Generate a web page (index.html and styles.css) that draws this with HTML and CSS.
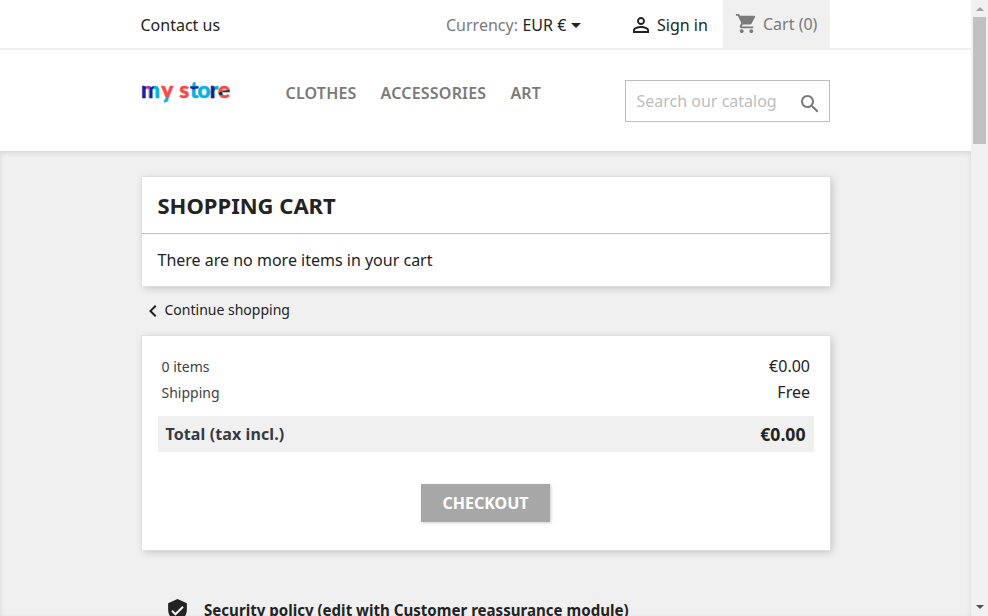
FILE: index.html
```html
<!DOCTYPE html>
<html lang="en">
<head>
<meta charset="utf-8">
<title>Cart</title>
<link rel="stylesheet" href="styles.css">
</head>
<body>
<div class="page">
  <header class="header">
    <nav class="topbar">
      <div class="container topbar-row">
        <a class="contact">Contact us</a>
        <div class="currency"><span class="muted">Currency:</span> <span>EUR €</span><i class="caret"></i></div>
        <a class="signin"><svg class="user-icon" viewBox="0 0 24 24"><path d="M12 5.900a2.100 2.100 0 1 1 0 4.200 2.100 2.100 0 0 1 0-4.200m0 9c2.970 0 6.100 1.460 6.100 2.100v1.100H5.900V17c0-.64 3.130-2.100 6.100-2.100M12 4C9.790 4 8 5.790 8 8s1.790 4 4 4 4-1.790 4-4-1.790-4-4-4zm0 9c-2.670 0-8 1.340-8 4v3h16v-3c0-2.660-5.330-4-8-4z"/></svg><span>Sign in</span></a>
        <a class="cart"><svg class="cart-icon" viewBox="0 0 24 24"><path d="M7 18c-1.100 0-1.990.9-1.990 2S5.900 22 7 22s2-.9 2-2-.9-2-2-2zM1 2v2h2l3.600 7.590-1.350 2.450c-.16.280-.25.610-.25.960 0 1.100.9 2 2 2h12v-2H7.420c-.14 0-.25-.11-.25-.25l.03-.12.9-1.630h7.450c.75 0 1.410-.41 1.750-1.030l3.580-6.490c.08-.14.12-.31.12-.48 0-.55-.45-1-1-1H5.210l-.94-2H1zm16 16c-1.100 0-1.990.9-1.990 2s.89 2 1.990 2 2-.9 2-2-.9-2-2-2z"/></svg><span>Cart (0)</span></a>
      </div>
    </nav>
    <div class="container main-row">
      <svg class="logo" viewBox="0 0 92 30">
        <defs>
          <linearGradient id="m" gradientUnits="userSpaceOnUse" x1="1" y1="0" x2="20" y2="0"><stop offset=".18" stop-color="#0a2aa5"/><stop offset=".22" stop-color="#c52cae"/><stop offset=".4" stop-color="#c52cae"/><stop offset=".44" stop-color="#0a2aa5"/><stop offset=".6" stop-color="#0a2aa5"/><stop offset=".66" stop-color="#00b4e4"/></linearGradient>
          <linearGradient id="y" gradientUnits="userSpaceOnUse" x1="0" y1="10" x2="0" y2="28"><stop offset=".58" stop-color="#ff4545"/><stop offset=".64" stop-color="#00b4e4"/></linearGradient>
          <linearGradient id="t" gradientUnits="userSpaceOnUse" x1="0" y1="4" x2="0" y2="22"><stop offset=".34" stop-color="#00b4e4"/><stop offset=".38" stop-color="#12209c"/><stop offset=".5" stop-color="#12209c"/><stop offset=".54" stop-color="#00b4e4"/></linearGradient>
          <linearGradient id="r" gradientUnits="userSpaceOnUse" x1="69" y1="0" x2="78" y2="0"><stop offset=".48" stop-color="#12209c"/><stop offset=".55" stop-color="#00b4e4"/></linearGradient>
          <linearGradient id="e" gradientUnits="userSpaceOnUse" x1="81" y1="10" x2="84" y2="22"><stop offset=".42" stop-color="#ff4545"/><stop offset=".48" stop-color="#063a46"/><stop offset=".66" stop-color="#063a46"/><stop offset=".7" stop-color="#ff4545"/></linearGradient>
        </defs>
        <text class="logo-text" y="22" x="0 20.300 30 38.300 49 56.500 68.700 77"><tspan fill="url(#m)" stroke="url(#m)">m</tspan><tspan fill="url(#y)" stroke="url(#y)">y</tspan> <tspan fill="#ff4545" stroke="#ff4545">s</tspan><tspan fill="url(#t)" stroke="url(#t)">t</tspan><tspan fill="#00b4e4" stroke="#00b4e4">o</tspan><tspan fill="url(#r)" stroke="url(#r)">r</tspan><tspan fill="url(#e)" stroke="url(#e)">e</tspan></text>
      </svg>
      <ul class="menu"><li>CLOTHES</li><li>ACCESSORIES</li><li>ART</li></ul>
      <div class="search"><span>Search our catalog</span><svg class="search-icon" viewBox="0 0 24 24"><path d="M15.500 14h-.79l-.28-.27C15.410 12.590 16 11.110 16 9.500 16 5.910 13.090 3 9.500 3S3 5.910 3 9.500 5.910 16 9.500 16c1.610 0 3.090-.59 4.230-1.570l.27.280v.79l5 4.990L20.490 19l-4.990-5zm-6 0C7.010 14 5 11.990 5 9.500S7.010 5 9.500 5 14 7.010 14 9.500 11.990 14 9.500 14z"/></svg></div>
    </div>
  </header>
  <main class="wrapper">
    <div class="container">
      <section class="card">
        <h1>SHOPPING CART</h1>
        <p class="empty">There are no more items in your cart</p>
      </section>
      <a class="continue"><svg class="chevron" viewBox="0 0 24 24"><path d="M15.410 7.410L14 6l-6 6 6 6 1.410-1.410L10.830 12z"/></svg><span>Continue shopping</span></a>
      <section class="card summary">
        <div class="line"><span class="label">0 items</span><span>€0.00</span></div>
        <div class="line"><span class="label">Shipping</span><span>Free</span></div>
        <div class="total"><span class="total-label">Total (tax incl.)</span><span class="total-value">€0.00</span></div>
        <button class="checkout" disabled>CHECKOUT</button>
      </section>
      <div class="assurance"><svg class="shield" viewBox="0 0 24 24"><path d="M12 1L3 5v6c0 5.550 3.840 10.740 9 12 5.160-1.260 9-6.450 9-12V5l-9-4zm-2 16l-4-4 1.410-1.410L10 14.170l6.590-6.590L18 9l-8 8z"/></svg><span>Security policy (edit with Customer reassurance module)</span></div>
    </div>
  </main>
</div>
<div class="scrollbar"><i class="arrow up"></i><i class="thumb"></i><i class="arrow down"></i></div>
</body>
</html>
```
FILE: styles.css
```css
* { box-sizing: border-box; }
body {
  margin: 0;
  height: 616px;
  overflow: hidden;
  display: flex;
  font: 16px/24px "Noto Sans", sans-serif;
  color: #232323;
  background: #f0f0f0;
}
svg { display: block; flex: none; fill: currentColor; }
.page { width: 971px; height: 616px; overflow: hidden; display: flex; flex-direction: column; }
.container { width: 690px; margin: 0 140px 0 141px; }
.header { background: #fff; height: 151px; flex: none; }
.topbar { height: 50px; border-bottom: 2px solid #f0f0f0; }
.topbar-row { display: flex; height: 48px; align-items: center; padding-top: 1px; }
.contact { width: 305px; margin-left: -.5px; }
.currency { width: 184.5px; white-space: nowrap; display: flex; align-items: center; gap: 4.5px; padding-left: .5px; }
.muted { color: #7a7a7a; }
.caret { border: 5px solid transparent; border-top-color: #232323; border-bottom: 0; margin: 1px 0 0; }
.signin { width: 93px; display: flex; gap: 4px; align-items: center; margin-left: -1px; }
.user-icon { width: 24px; height: 24px; }
.cart { width: 107px; height: 48px; margin-top: -1px; margin-left: 1px; background: #f0f0f0; color: #7a7a7a; display: flex; align-items: center; gap: 5px; padding-left: 12px; }
.cart-icon { width: 23px; height: 23px; margin-top: -1px; }
.main-row { display: flex; padding-top: 30px; }
.logo { width: 92px; height: 30px; margin-top: -4px; margin-left: -.5px; }
.logo-text { font: 900 22.500px Lato, sans-serif; stroke-width: .5px; }
.menu { display: flex; gap: 24px; list-style: none; margin: 1px 0 0; padding: 0 0 0 53px; font-weight: 600; letter-spacing: .2px; color: #7a7a7a; }
.search { width: 205px; height: 42px; border: 1px solid #bdbdbd; margin-left: auto; margin-right: 1px; display: flex; align-items: center; justify-content: space-between; padding: 0 7px 0 10.5px; color: #bdbdbd; }
.search-icon { width: 24px; height: 24px; color: #7a7a7a; margin-top: 5px; }
.wrapper { flex: 1; min-height: 0; padding-top: 26px; box-shadow: inset 0 2px 5px 0 rgba(0,0,0,.11); }
.card { margin: 0 1px; height: 109px; background: #fff; box-shadow: 0 0 0 1px #e0e0e0, 2px 2px 8px 0 rgba(0,0,0,.2); }
h1 { margin: 0; height: 57px; padding: 16px 15.500px 0; border-bottom: 1px solid #bdbdbd; font-size: 22px; line-height: 24px; font-weight: 700; }
.empty { margin: 0; padding: 14px 15.500px; }
.continue { display: flex; align-items: center; height: 50px; font-size: 14px; padding: 0 0 2px; margin-left: -.5px; }
.chevron { width: 24px; height: 24px; margin-top: 1px; }
.summary { height: 214px; padding: 17px 16px 0; }
.line { display: flex; justify-content: space-between; height: 26px; line-height: 26px; padding: 0 4px 0 3.500px; }
.label { font-size: 14px; line-height: 28px; color: #414141; }
.total { margin-top: 11px; height: 36px; line-height: 36px; background: #f0f0f0; padding: 0 8.500px 0 7.500px; display: flex; justify-content: space-between; font-weight: 700; }
.total-label { color: #363a42; letter-spacing: .1px; }
.total-value { font-size: 17.600px; }
.checkout { display: block; width: 129px; height: 38px; margin: 32px 0 0 263px; border: 0; padding: 0; color: #fff; background: #a7a7a7; font: 700 16px "Noto Sans", sans-serif; box-shadow: 1px 1px 3px rgba(0,0,0,.2); }
.assurance { display: flex; margin-top: 48px; padding-left: 24px; gap: 14px; font-size: 15.080px; font-weight: 700; white-space: nowrap; }
.shield { width: 25px; height: 25px; }
.scrollbar { width: 17px; height: 616px; background: #f1f1f1; display: flex; flex-direction: column; align-items: center; padding: 7px 0; }
.thumb { width: 13px; height: 127px; background: #c1c1c1; margin-top: 6px; }
.arrow { border: 4px solid transparent; border-top: 0; border-bottom-color: #a3a3a3; }
.down { border: 4px solid transparent; border-bottom: 0; border-top-color: #505050; margin-top: auto; }
```
